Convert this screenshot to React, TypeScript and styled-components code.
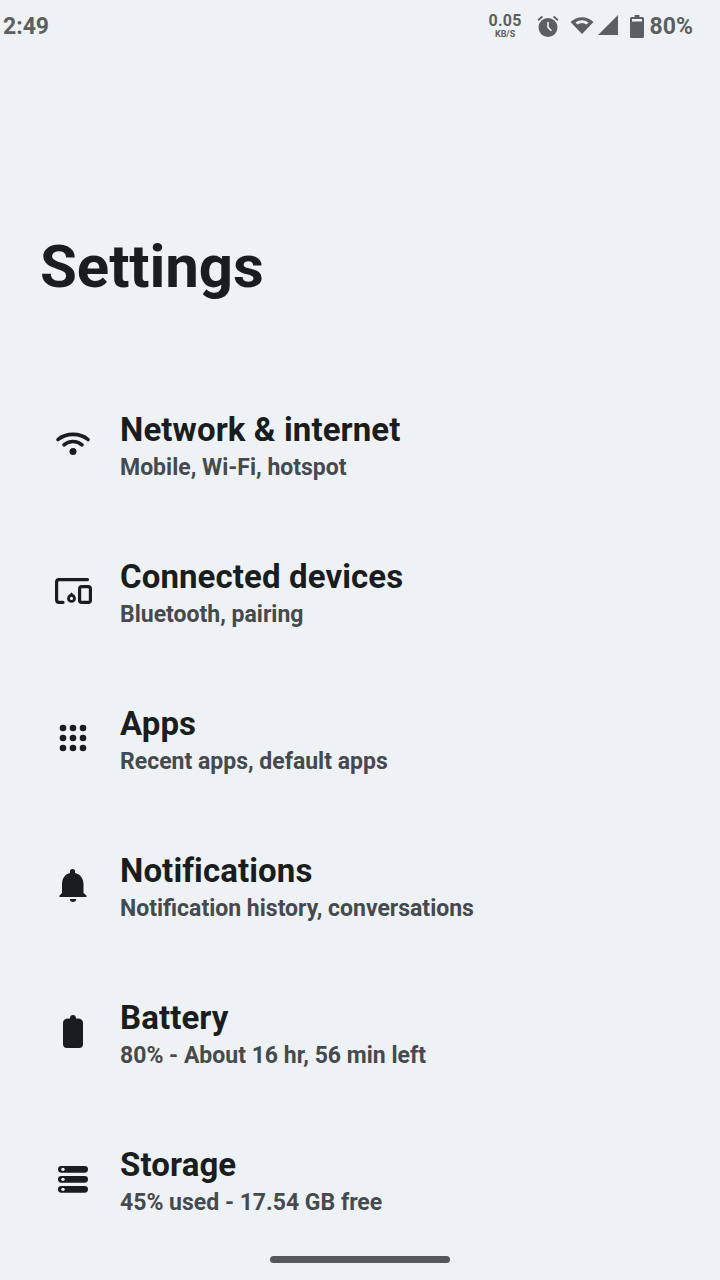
import React from "react";
import styled, { createGlobalStyle } from "styled-components";

const Global = createGlobalStyle`
  html, body { margin: 0; padding: 0; background: #eff2f4; }
  body { font-family: Roboto, "Liberation Sans", sans-serif; }
`;

const Screen = styled.div`
  width: 720px;
  height: 1280px;
  position: relative;
  overflow: hidden;
  background: #eff2f4;
  display: flex;
  flex-direction: column;
`;

const StatusBar = styled.div`
  height: 52px;
  flex: none;
  display: flex;
  align-items: center;
  justify-content: space-between;
  padding: 0 27px 0 3px;
  color: #5c5f62;
  font-weight: 700;
`;

const Time = styled.span`
  font-size: 23px;
`;

const StatusRight = styled.div`
  display: flex;
  align-items: center;
`;

const Speed = styled.div`
  display: flex;
  flex-direction: column;
  align-items: center;
  width: 33px;
  margin-right: 13px;
  line-height: 1;
`;

const SpeedValue = styled.span`
  font-size: 16px;
  letter-spacing: 0.3px;
  line-height: 16px;
`;

const SpeedUnit = styled.span`
  font-size: 9px;
  line-height: 10px;
`;

const StatusIcon = styled.svg<{ $gap?: number }>`
  display: block;
  fill: #5c5f62;
  margin-right: ${(p) => p.$gap ?? 0}px;
`;

const Percent = styled.span`
  font-size: 23px;
  margin-left: 6px;
`;

const Title = styled.h1`
  margin: 0;
  flex: none;
  padding: 180px 0 109px 40px;
  font-size: 60px;
  line-height: 70px;
  font-weight: 700;
  color: #1a1d20;
  letter-spacing: -0.1px;
`;

const List = styled.div`
  display: flex;
  flex: none;
  flex-direction: column;
`;

const Row = styled.div`
  height: 147px;
  display: flex;
  align-items: flex-start;
  flex: none;
`;

const IconSlot = styled.div`
  width: 120px;
  height: 64px;
  flex: none;
  display: flex;
  align-items: center;
  justify-content: center;
  padding-left: 26px;
  box-sizing: border-box;
`;

const RowIcon = styled.svg`
  display: block;
  width: 40px;
  height: 40px;
  color: #1a1d20;
`;

const RowText = styled.div`
  display: flex;
  flex-direction: column;
`;

const RowTitle = styled.div`
  font-size: 33px;
  line-height: 37px;
  letter-spacing: 0.1px;
  font-weight: 700;
  color: #1a1d20;
`;

const RowSub = styled.div`
  font-size: 23px;
  line-height: 40px;
  font-weight: 700;
  color: #454a4f;
`;

const HomeBar = styled.div`
  position: absolute;
  left: 270px;
  top: 1256px;
  width: 180px;
  height: 7px;
  border-radius: 4px;
  background: #55585b;
`;

const WifiIcon = () => (
  <RowIcon viewBox="0 0 40 40" fill="none" stroke="currentColor" strokeWidth="3.6" strokeLinecap="round">
    <path d="M5 16.500 C13 9.700 27 9.700 35 16.500" />
    <path d="M11 21.800 C16 17.300 24 17.300 29 21.800" />
    <circle cx="20" cy="28.500" r="3.500" fill="currentColor" stroke="none" />
  </RowIcon>
);

const DevicesIcon = () => (
  <RowIcon viewBox="0 0 40 40" fill="none" stroke="currentColor" strokeWidth="3.2">
    <path d="M34.500 9.600 H6 Q3.600 9.600 3.600 12 V29.800 Q3.600 32.400 6 32.400 H10" strokeLinecap="round" />
    <rect x="26.600" y="16.600" width="10.800" height="15.800" rx="2.200" />
    <circle cx="18.500" cy="28.400" r="3" strokeWidth="2.800" />
    <path d="M16 25.500 L18.500 22.200 L21 25.500 Z" fill="currentColor" stroke="none" />
  </RowIcon>
);

const AppsIcon = () => (
  <RowIcon viewBox="0 0 40 40" fill="currentColor">
    {[11, 21, 31].flatMap((y) =>
      [10, 20, 30].map((x) => <circle key={`${x}-${y}`} cx={x} cy={y} r="3.300" />)
    )}
  </RowIcon>
);

const BellIcon = () => (
  <RowIcon viewBox="0 0 40 40" fill="currentColor">
    <path d="M20 5 a2.600 2.600 0 0 1 2.600 2.600 V9 C28.400 10.400 31 15 31 20.400 V29 L34 31.600 V33 H7 V31.600 L9.500 29 V20.400 C9.500 15 12 10.400 17.400 9 V7.600 A2.600 2.600 0 0 1 20 5 Z" transform="translate(-0.500 0)" />
    <path d="M16.800 35 H23.200 C23.200 37 21.800 38 20 38 C18.200 38 16.800 37 16.800 35 Z" />
  </RowIcon>
);

const BatteryIcon = () => (
  <RowIcon viewBox="0 0 40 40" fill="currentColor">
    <path d="M17 7.500 Q17 4 20 4 Q23 4 23 7.500 H25.500 Q30 8 30 12 V33 Q30 37 26 37 H14 Q10 37 10 33 V12 Q10 8 14.500 7.500 Z" />
  </RowIcon>
);

const StorageIcon = () => (
  <RowIcon viewBox="0 0 40 40">
    {[8, 18, 28].map((y) => (
      <g key={y}>
        <rect x="5" y={y} width="30" height="6.700" rx="3.350" fill="currentColor" />
        <circle cx="10" cy={y + 3.350} r="1.700" fill="#eff2f4" />
      </g>
    ))}
  </RowIcon>
);

const items = [
  { title: "Network & internet", sub: "Mobile, Wi-Fi, hotspot", Icon: WifiIcon },
  { title: "Connected devices", sub: "Bluetooth, pairing", Icon: DevicesIcon },
  { title: "Apps", sub: "Recent apps, default apps", Icon: AppsIcon },
  { title: "Notifications", sub: "Notification history, conversations", Icon: BellIcon },
  { title: "Battery", sub: "80% - About 16 hr, 56 min left", Icon: BatteryIcon },
  { title: "Storage", sub: "45% used - 17.54 GB free", Icon: StorageIcon },
];

export default function App() {
  return (
    <Screen>
      <Global />
      <StatusBar>
        <Time>2:49</Time>
        <StatusRight>
          <Speed>
            <SpeedValue>0.05</SpeedValue>
            <SpeedUnit>KB/S</SpeedUnit>
          </Speed>
          <StatusIcon $gap={9} width="26" height="26" viewBox="0 0 26 26">
            <path d="M13 5 a9.500 9.500 0 1 1 0 19 a9.500 9.500 0 0 1 0 -19 Z" />
            <path d="M2.500 6.500 L6.800 2.800 L8 4.200 L3.700 7.900 Z M23.500 6.500 L19.200 2.800 L18 4.200 L22.300 7.900 Z" />
            <path d="M12.200 9 H13.800 V14 L17 17.200 L15.900 18.300 L12.200 14.700 Z" fill="#eff2f4" />
          </StatusIcon>
          <StatusIcon $gap={4} width="24" height="24" viewBox="0 0 24 24">
            <path d="M0.500 8 C7 1.500 17 1.500 23.500 8 L12 20 Z" />
            <path d="M5.500 8.500 C9.500 5.500 14.500 5.500 18.500 8.500 L16.600 10.500 C13.500 8.500 10.500 8.500 7.400 10.500 Z" fill="#eff2f4" />
          </StatusIcon>
          <StatusIcon $gap={12} width="20" height="22" viewBox="0 0 20 22">
            <path d="M20 0 V20 H0 Z" />
          </StatusIcon>
          <StatusIcon width="14" height="23" viewBox="0 0 14 23">
            <path d="M4.500 0 H9.500 V2 H12.500 Q14 2 14 3.500 V21.500 Q14 23 12.500 23 H1.500 Q0 23 0 21.500 V3.500 Q0 2 1.500 2 H4.500 Z" />
            <rect x="2" y="4" width="10" height="2.500" fill="#eff2f4" />
          </StatusIcon>
          <Percent>80%</Percent>
        </StatusRight>
      </StatusBar>
      <Title>Settings</Title>
      <List>
        {items.map(({ title, sub, Icon }) => (
          <Row key={title}>
            <IconSlot>
              <Icon />
            </IconSlot>
            <RowText>
              <RowTitle>{title}</RowTitle>
              <RowSub>{sub}</RowSub>
            </RowText>
          </Row>
        ))}
      </List>
      <HomeBar />
    </Screen>
  );
}
